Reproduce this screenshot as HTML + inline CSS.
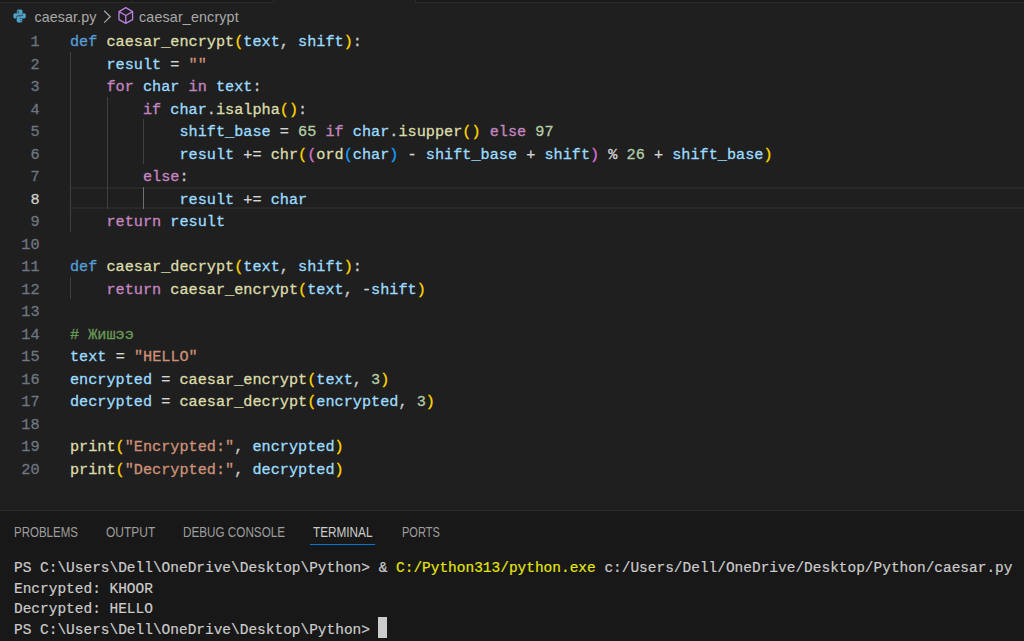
<!DOCTYPE html>
<html><head><meta charset="utf-8">
<style>
html,body{margin:0;padding:0;width:1024px;height:641px;overflow:hidden;background:#1f1f1f;}
body{position:relative;font-family:"Liberation Mono",monospace;}
.a{position:absolute;}
.tb{position:absolute;top:0;height:2px;background:#181818;}
.crumb{position:absolute;top:0;height:30px;font-family:"Liberation Sans",sans-serif;font-size:14.3px;color:#a9a9a9;white-space:pre;line-height:30px;}
.ln{position:absolute;margin-top:1px;left:0;width:40.3px;text-align:right;color:#6e7681;font-size:15.5px;transform:scaleX(0.9806);transform-origin:0 0;-webkit-text-stroke:0.3px;line-height:22.5px;height:22.5px;white-space:pre;}
.cl{position:absolute;margin-top:1px;left:69.9px;font-size:15.5px;transform:scaleX(0.9806);transform-origin:0 0;-webkit-text-stroke:0.3px;line-height:22.5px;height:22.5px;white-space:pre;color:#cccccc;}
.g{position:absolute;width:1px;background:#404040;}
.k{color:#569cd6}.c{color:#c586c0}.f{color:#dcdcaa}.v{color:#9cdcfe}.s{color:#ce9178}.n{color:#b5cea8}.o{color:#d4d4d4}.cm{color:#6a9955}
.b1{color:#ffd700}.b2{color:#da70d6}.b3{color:#179fff}
.panel{position:absolute;left:0;top:510px;width:1024px;height:131px;background:#181818;border-top:1px solid #2b2b2b;box-sizing:border-box;}
.pt{position:absolute;top:-1px;transform-origin:0 0;font-family:"Liberation Sans",sans-serif;font-size:14.5px;color:#9d9d9d;line-height:44px;white-space:pre;}
.term{position:absolute;left:14px;font-size:15.5px;transform:scaleX(0.9334);transform-origin:0 0;-webkit-text-stroke:0.2px;line-height:20.45px;white-space:pre;color:#cccccc;}
.y{color:#e5e510}
</style></head><body>
<!-- tab bar bottom -->
<div class="tb" style="left:0;width:274px;border-bottom:1px solid #2b2b2b;height:2px"></div>
<div class="a" style="left:131px;top:0;width:1px;height:3px;background:#2b2b2b"></div>
<div class="a" style="left:273px;top:0;width:1px;height:3px;background:#2b2b2b"></div>
<div class="tb" style="left:415px;width:609px;border-bottom:1px solid #2b2b2b;border-left:1px solid #2b2b2b;height:2px"></div>

<!-- breadcrumbs -->
<svg class="a" style="left:13.4px;top:9.3px" width="13.2" height="13.8" viewBox="0 0 14 14" preserveAspectRatio="none">
<path fill="#4fa3c9" fill-rule="evenodd" d="M5.6 0.4H8.4Q10.1 0.4 10.1 2.1V5.2Q10.1 6.6 8.7 6.6H5.3Q3.6 6.6 3.6 8.3V9.6H2.1Q0.4 9.6 0.4 7.9V6.1Q0.4 4.4 2.1 4.4H7V3.8H4V2.1Q4 0.4 5.6 0.4ZM5.5 1.6A0.65 0.65 0 1 0 5.5 2.9A0.65 0.65 0 1 0 5.5 1.6Z"/>
<path fill="#4fa3c9" fill-rule="evenodd" d="M8.4 13.6H5.6Q3.9 13.6 3.9 11.9V8.8Q3.9 7.4 5.3 7.4H8.7Q10.4 7.4 10.4 5.7V4.4H11.9Q13.6 4.4 13.6 6.1V7.9Q13.6 9.6 11.9 9.6H7V10.2H10V11.9Q10 13.6 8.4 13.6ZM8.5 12.4A0.65 0.65 0 1 0 8.5 11.1A0.65 0.65 0 1 0 8.5 12.4Z"/>
</svg>
<div class="crumb" style="left:34.5px;top:2px;letter-spacing:0.08px">caesar.py</div>
<svg class="a" style="left:101px;top:9px" width="12" height="16" viewBox="0 0 12 16"><path d="M3.2 1.8L9.2 7.7L3.2 13.6" fill="none" stroke="#a9a9a9" stroke-width="1.25"/></svg>
<svg class="a" style="left:117px;top:6px" width="18" height="19" viewBox="0 0 18 19"><path d="M8.8 1.7L15.6 5.6V13.6L8.8 17.4L2 13.6V5.6Z M2 5.6L8.8 9.5L15.6 5.6 M8.8 9.5V17.4" fill="none" stroke="#b87fde" stroke-width="1.35" stroke-linejoin="round"/></svg>
<div class="crumb" style="left:139px;top:2px;letter-spacing:0.15px">caesar_encrypt</div>

<!-- line numbers -->
<div class="ln" style="top:30.2px">1</div>
<div class="ln" style="top:52.7px">2</div>
<div class="ln" style="top:75.2px">3</div>
<div class="ln" style="top:97.7px">4</div>
<div class="ln" style="top:120.2px">5</div>
<div class="ln" style="top:142.7px">6</div>
<div class="ln" style="top:165.2px">7</div>
<div class="ln" style="top:187.7px;color:#cccccc">8</div>
<div class="ln" style="top:210.2px">9</div>
<div class="ln" style="top:232.7px">10</div>
<div class="ln" style="top:255.2px">11</div>
<div class="ln" style="top:277.7px">12</div>
<div class="ln" style="top:300.2px">13</div>
<div class="ln" style="top:322.7px">14</div>
<div class="ln" style="top:345.2px">15</div>
<div class="ln" style="top:367.7px">16</div>
<div class="ln" style="top:390.2px">17</div>
<div class="ln" style="top:412.7px">18</div>
<div class="ln" style="top:435.2px">19</div>
<div class="ln" style="top:457.7px">20</div>

<!-- current line highlight -->
<div class="a" style="left:70px;top:187px;width:954px;height:22px;box-sizing:border-box;border-top:2px solid #282828;border-bottom:2px solid #282828"></div>

<!-- indent guides -->
<div class="g" style="left:70px;top:51.9px;height:180px"></div>
<div class="g" style="left:107px;top:96.9px;height:112px"></div>
<div class="g" style="left:143px;top:119.4px;height:45px"></div>
<div class="g" style="left:143px;top:186.9px;height:22px;background:#707070"></div>
<div class="g" style="left:70px;top:276.9px;height:22.5px"></div>

<!-- code -->
<div class="cl" style="top:30.2px"><span class="k">def</span> <span class="f">caesar_encrypt</span><span class="b1">(</span><span class="v">text</span>, <span class="v">shift</span><span class="b1">)</span>:</div>
<div class="cl" style="top:52.7px">    <span class="v">result</span> <span class="o">=</span> <span class="s">""</span></div>
<div class="cl" style="top:75.2px">    <span class="c">for</span> <span class="v">char</span> <span class="c">in</span> <span class="v">text</span>:</div>
<div class="cl" style="top:97.7px">        <span class="c">if</span> <span class="v">char</span>.<span class="f">isalpha</span><span class="b1">()</span>:</div>
<div class="cl" style="top:120.2px">            <span class="v">shift_base</span> <span class="o">=</span> <span class="n">65</span> <span class="c">if</span> <span class="v">char</span>.<span class="f">isupper</span><span class="b1">()</span> <span class="c">else</span> <span class="n">97</span></div>
<div class="cl" style="top:142.7px">            <span class="v">result</span> <span class="o">+=</span> <span class="f">chr</span><span class="b1">(</span><span class="b2">(</span><span class="f">ord</span><span class="b3">(</span><span class="v">char</span><span class="b3">)</span> <span class="o">-</span> <span class="v">shift_base</span> <span class="o">+</span> <span class="v">shift</span><span class="b2">)</span> <span class="o">%</span> <span class="n">26</span> <span class="o">+</span> <span class="v">shift_base</span><span class="b1">)</span></div>
<div class="cl" style="top:165.2px">        <span class="c">else</span>:</div>
<div class="cl" style="top:187.7px">            <span class="v">result</span> <span class="o">+=</span> <span class="v">char</span></div>
<div class="cl" style="top:210.2px">    <span class="c">return</span> <span class="v">result</span></div>
<div class="cl" style="top:255.2px"><span class="k">def</span> <span class="f">caesar_decrypt</span><span class="b1">(</span><span class="v">text</span>, <span class="v">shift</span><span class="b1">)</span>:</div>
<div class="cl" style="top:277.7px">    <span class="c">return</span> <span class="f">caesar_encrypt</span><span class="b1">(</span><span class="v">text</span>, <span class="o">-</span><span class="v">shift</span><span class="b1">)</span></div>
<div class="cl" style="top:322.7px"><span class="cm"># Жишээ</span></div>
<div class="cl" style="top:345.2px"><span class="v">text</span> <span class="o">=</span> <span class="s">"HELLO"</span></div>
<div class="cl" style="top:367.7px"><span class="v">encrypted</span> <span class="o">=</span> <span class="f">caesar_encrypt</span><span class="b1">(</span><span class="v">text</span>, <span class="n">3</span><span class="b1">)</span></div>
<div class="cl" style="top:390.2px"><span class="v">decrypted</span> <span class="o">=</span> <span class="f">caesar_decrypt</span><span class="b1">(</span><span class="v">encrypted</span>, <span class="n">3</span><span class="b1">)</span></div>
<div class="cl" style="top:435.2px"><span class="f">print</span><span class="b1">(</span><span class="s">"Encrypted:"</span>, <span class="v">encrypted</span><span class="b1">)</span></div>
<div class="cl" style="top:457.7px"><span class="f">print</span><span class="b1">(</span><span class="s">"Decrypted:"</span>, <span class="v">decrypted</span><span class="b1">)</span></div>

<!-- panel -->
<div class="panel">
<div class="pt" style="left:13.7px;transform:scaleX(0.793)">PROBLEMS</div>
<div class="pt" style="left:105.5px;transform:scaleX(0.826)">OUTPUT</div>
<div class="pt" style="left:183px;transform:scaleX(0.807)">DEBUG CONSOLE</div>
<div class="pt" style="left:313px;color:#cccccc;transform:scaleX(0.811)">TERMINAL</div>
<div class="a" style="left:310px;top:33px;width:65px;height:1px;background:#0078d4"></div>
<div class="pt" style="left:401.7px;transform:scaleX(0.761)">PORTS</div>
</div>

<div class="term" style="top:558px">PS C:\Users\Dell\OneDrive\Desktop\Python&gt; &amp; <span class="y">C:/Python313/python.exe</span> c:/Users/Dell/OneDrive/Desktop/Python/caesar.py</div>
<div class="term" style="top:578.5px">Encrypted: KHOOR</div>
<div class="term" style="top:599px">Decrypted: HELLO</div>
<div class="term" style="top:619.5px">PS C:\Users\Dell\OneDrive\Desktop\Python&gt; </div>
<div class="a" style="left:378px;top:617px;width:9px;height:21px;background:#cccccc"></div>
</body></html>
